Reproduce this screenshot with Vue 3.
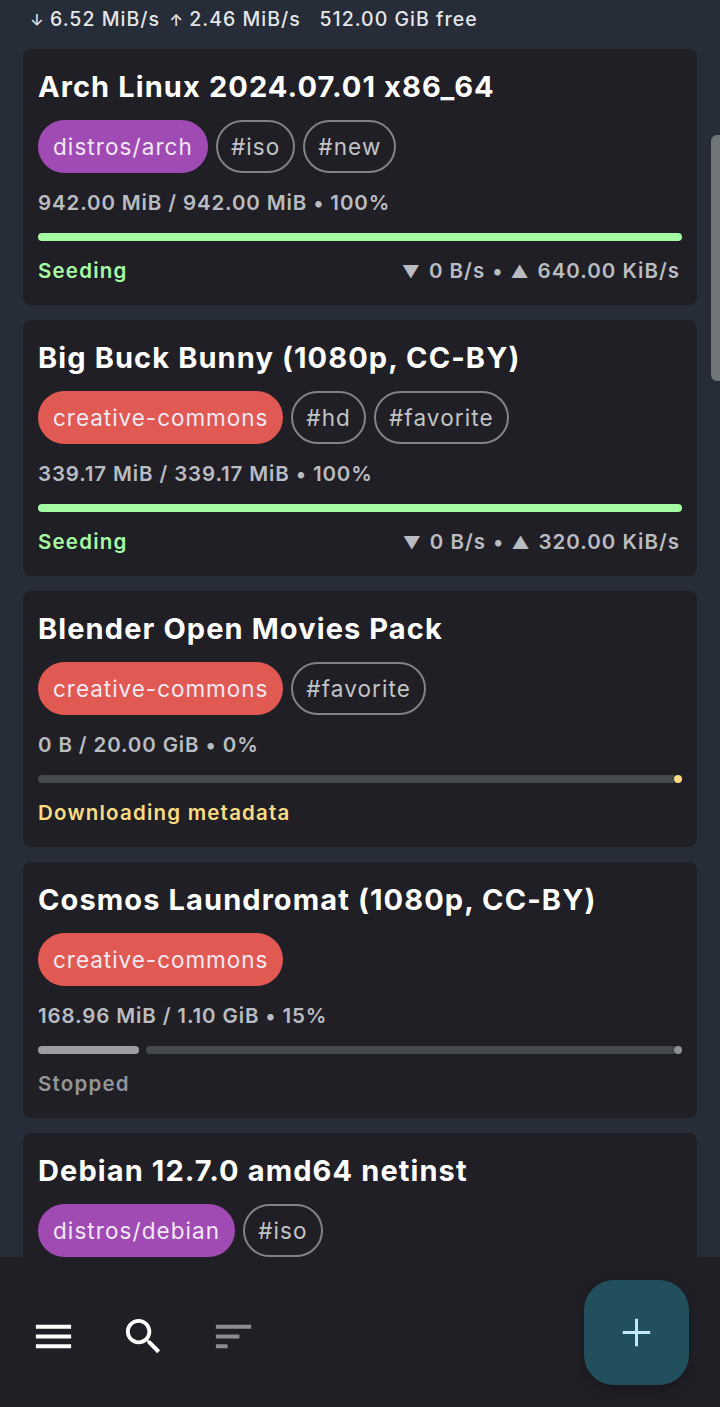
<script setup>
const items = [
  { title: 'Arch Linux 2024.07.01 x86_64', tags: [{ t: 'distros/arch', c: 'purple' }, { t: '#iso' }, { t: '#new' }], meta: '942.00 MiB / 942.00 MiB • 100%', state: 'seed', label: 'Seeding', down: '0 B/s', up: '640.00 KiB/s' },
  { title: 'Big Buck Bunny (1080p, CC-BY)', tags: [{ t: 'creative-commons', c: 'red' }, { t: '#hd' }, { t: '#favorite' }], meta: '339.17 MiB / 339.17 MiB • 100%', state: 'seed', label: 'Seeding', down: '0 B/s', up: '320.00 KiB/s' },
  { title: 'Blender Open Movies Pack', tags: [{ t: 'creative-commons', c: 'red' }, { t: '#favorite' }], meta: '0 B / 20.00 GiB • 0%', state: 'fetch', label: 'Downloading metadata' },
  { title: 'Cosmos Laundromat (1080p, CC-BY)', tags: [{ t: 'creative-commons', c: 'red' }], meta: '168.96 MiB / 1.10 GiB • 15%', state: 'stop', label: 'Stopped', pct: 101 },
  { title: 'Debian 12.7.0 amd64 netinst', tags: [{ t: 'distros/debian', c: 'purple' }, { t: '#iso' }], meta: '', state: 'stop', label: '' }
]
</script>

<template>
  <div class="page">
    <div class="status"><span class="arr">↓</span> 6.52 MiB/s <span class="arr up">↑</span> 2.46 MiB/s &nbsp; 512.00 GiB free</div>
    <div class="list">
      <article v-for="item in items" :key="item.title" class="card">
        <h2 class="title">{{ item.title }}</h2>
        <div class="tags">
          <span v-for="tag in item.tags" :key="tag.t" class="tag" :class="tag.c || 'outline'">{{ tag.t }}</span>
        </div>
        <p class="meta">{{ item.meta }}</p>
        <div class="bar" :class="item.state">
          <i v-if="item.pct" class="fill" :style="{ width: item.pct + 'px' }"></i>
          <i class="track"></i>
          <i v-if="item.state !== 'seed'" class="dot"></i>
        </div>
        <div class="foot">
          <span class="label" :class="item.state">{{ item.label }}</span>
          <span v-if="item.up" class="rate"><span class="tri">▼</span>{{ item.down }}<span class="sep">•</span><span class="tri">▲</span>{{ item.up }}</span>
        </div>
      </article>
      <div class="scroll"></div>
    </div>
    <nav class="bottom">
      <div class="actions">
        <svg class="ico" viewBox="0 0 24 24"><path d="M3 18h18v-2H3v2zm0-5h18v-2H3v2zm0-7v2h18V6H3z" /></svg>
        <svg class="ico" viewBox="0 0 24 24"><path d="M15.5 14h-.79l-.28-.27C15.41 12.59 16 11.11 16 9.5 16 5.91 13.09 3 9.5 3S3 5.91 3 9.5 5.91 16 9.5 16c1.61 0 3.09-.59 4.23-1.57l.27.28v.79l5 4.99L20.49 19l-4.99-5zm-6 0C7.01 14 5 11.99 5 9.5S7.01 5 9.5 5 14 7.01 14 9.5 11.99 14 9.5 14z" /></svg>
        <svg class="ico dim" viewBox="0 0 24 24"><path d="M3 18h6v-2H3v2zM3 6v2h18V6H3zm0 7h12v-2H3v2z" /></svg>
      </div>
      <button class="fab"><svg class="ico plus" viewBox="0 0 24 24"><path d="M19 12.75h-6.25V19h-1.5v-6.25H5v-1.5h6.25V5h1.5v6.25H19z" /></svg></button>
    </nav>
  </div>
</template>

<style>
html, body { margin: 0; background: #262c38; }
</style>

<style scoped>
.page { width: 720px; height: 1407px; display: flex; flex-direction: column; overflow: hidden; background: #262c38; font-family: Inter, "Noto Sans", sans-serif; }
.status { height: 38px; line-height: 38px; padding-left: 30px; color: #e4e6e8; font-size: 19.5px; font-weight: 500; flex: none; white-space: nowrap; letter-spacing: 1.02px; }
.arr { font-size: 16px; letter-spacing: 0; }
.arr.up { margin-left: 3px; }
.list { position: relative; flex: 1; min-height: 0; overflow: hidden; padding: 11px 23px 0; display: flex; flex-direction: column; gap: 15px; }
.card { flex: none; height: 256px; box-sizing: border-box; padding: 15px 15px 0; background: #211f26; border-radius: 8px; }
.title { margin: 0; height: 46px; line-height: 46px; font-size: 29px; font-weight: 700; color: #fff; white-space: nowrap; letter-spacing: 1.1px; }
.tags { margin-top: 10px; display: flex; gap: 8px; }
.tag { height: 53px; line-height: 53px; box-sizing: border-box; padding: 0 15px; border-radius: 27px; font-size: 22.5px; color: #f2e8f4; white-space: nowrap; letter-spacing: 1.08px; }
.tag.purple { background: #a04ab4; }
.tag.red { background: #e05a53; letter-spacing: 0.97px; }
.tag.outline { line-height: 49px; padding: 0 13px; border: 2px solid #808385; color: #c2c4c6; letter-spacing: 1.1px; }
.meta { margin: 15px 0 0; height: 30px; line-height: 30px; font-size: 20.5px; font-weight: 600; color: #b9bcc0; white-space: nowrap; letter-spacing: 0.87px; }
.bar { margin-top: 15px; height: 8px; display: flex; gap: 7px; align-items: center; position: relative; }
.bar i { display: block; height: 8px; border-radius: 4px; }
.track { flex: 1; background: #434b4f; }
.bar.seed .track { background: #a5fba3; }
.fill { flex: none; background: #9c9ea2; }
.bar.fetch .track, .bar.stop .track { margin-right: 8px; border-radius: 4px 0 0 4px; }
.dot { position: absolute; right: 0; top: 0; width: 8px; background: #8f9193; }
.bar.fetch .dot { background: #fbdc82; }
.foot { margin-top: 15px; height: 30px; line-height: 30px; display: flex; justify-content: space-between; font-size: 20.5px; font-weight: 600; white-space: nowrap; letter-spacing: 1.2px; }
.label.seed { color: #a5fba3; }
.label.fetch { color: #fbdc82; }
.label.stop { color: #939598; }
.rate { color: #b9bcc0; padding-right: 2px; letter-spacing: 1px; }
.tri { font-size: 17.5px; margin-right: 8px; }
.sep { margin: 0 7px; }
.scroll { position: absolute; right: 0; top: 97px; width: 9px; height: 246px; background: #70757a; border-radius: 6px 0 0 6px; }
.bottom { flex: none; height: 150px; background: #211f26; display: flex; align-items: center; justify-content: space-between; padding: 0 31px 0 30px; position: relative; }
.actions { display: flex; gap: 43px; padding-top: 9px; }
.ico { width: 47px; height: 47px; display: block; fill: #fff; }
.ico.dim { fill: #8a8d8f; }
.fab { width: 105px; height: 105px; border: 0; padding: 0; border-radius: 30px; background: #214f5c; display: flex; align-items: center; justify-content: center; box-shadow: 0 5px 12px rgba(0, 0, 0, 0.25); }
.ico.plus { fill: #c3eafa; }
</style>
